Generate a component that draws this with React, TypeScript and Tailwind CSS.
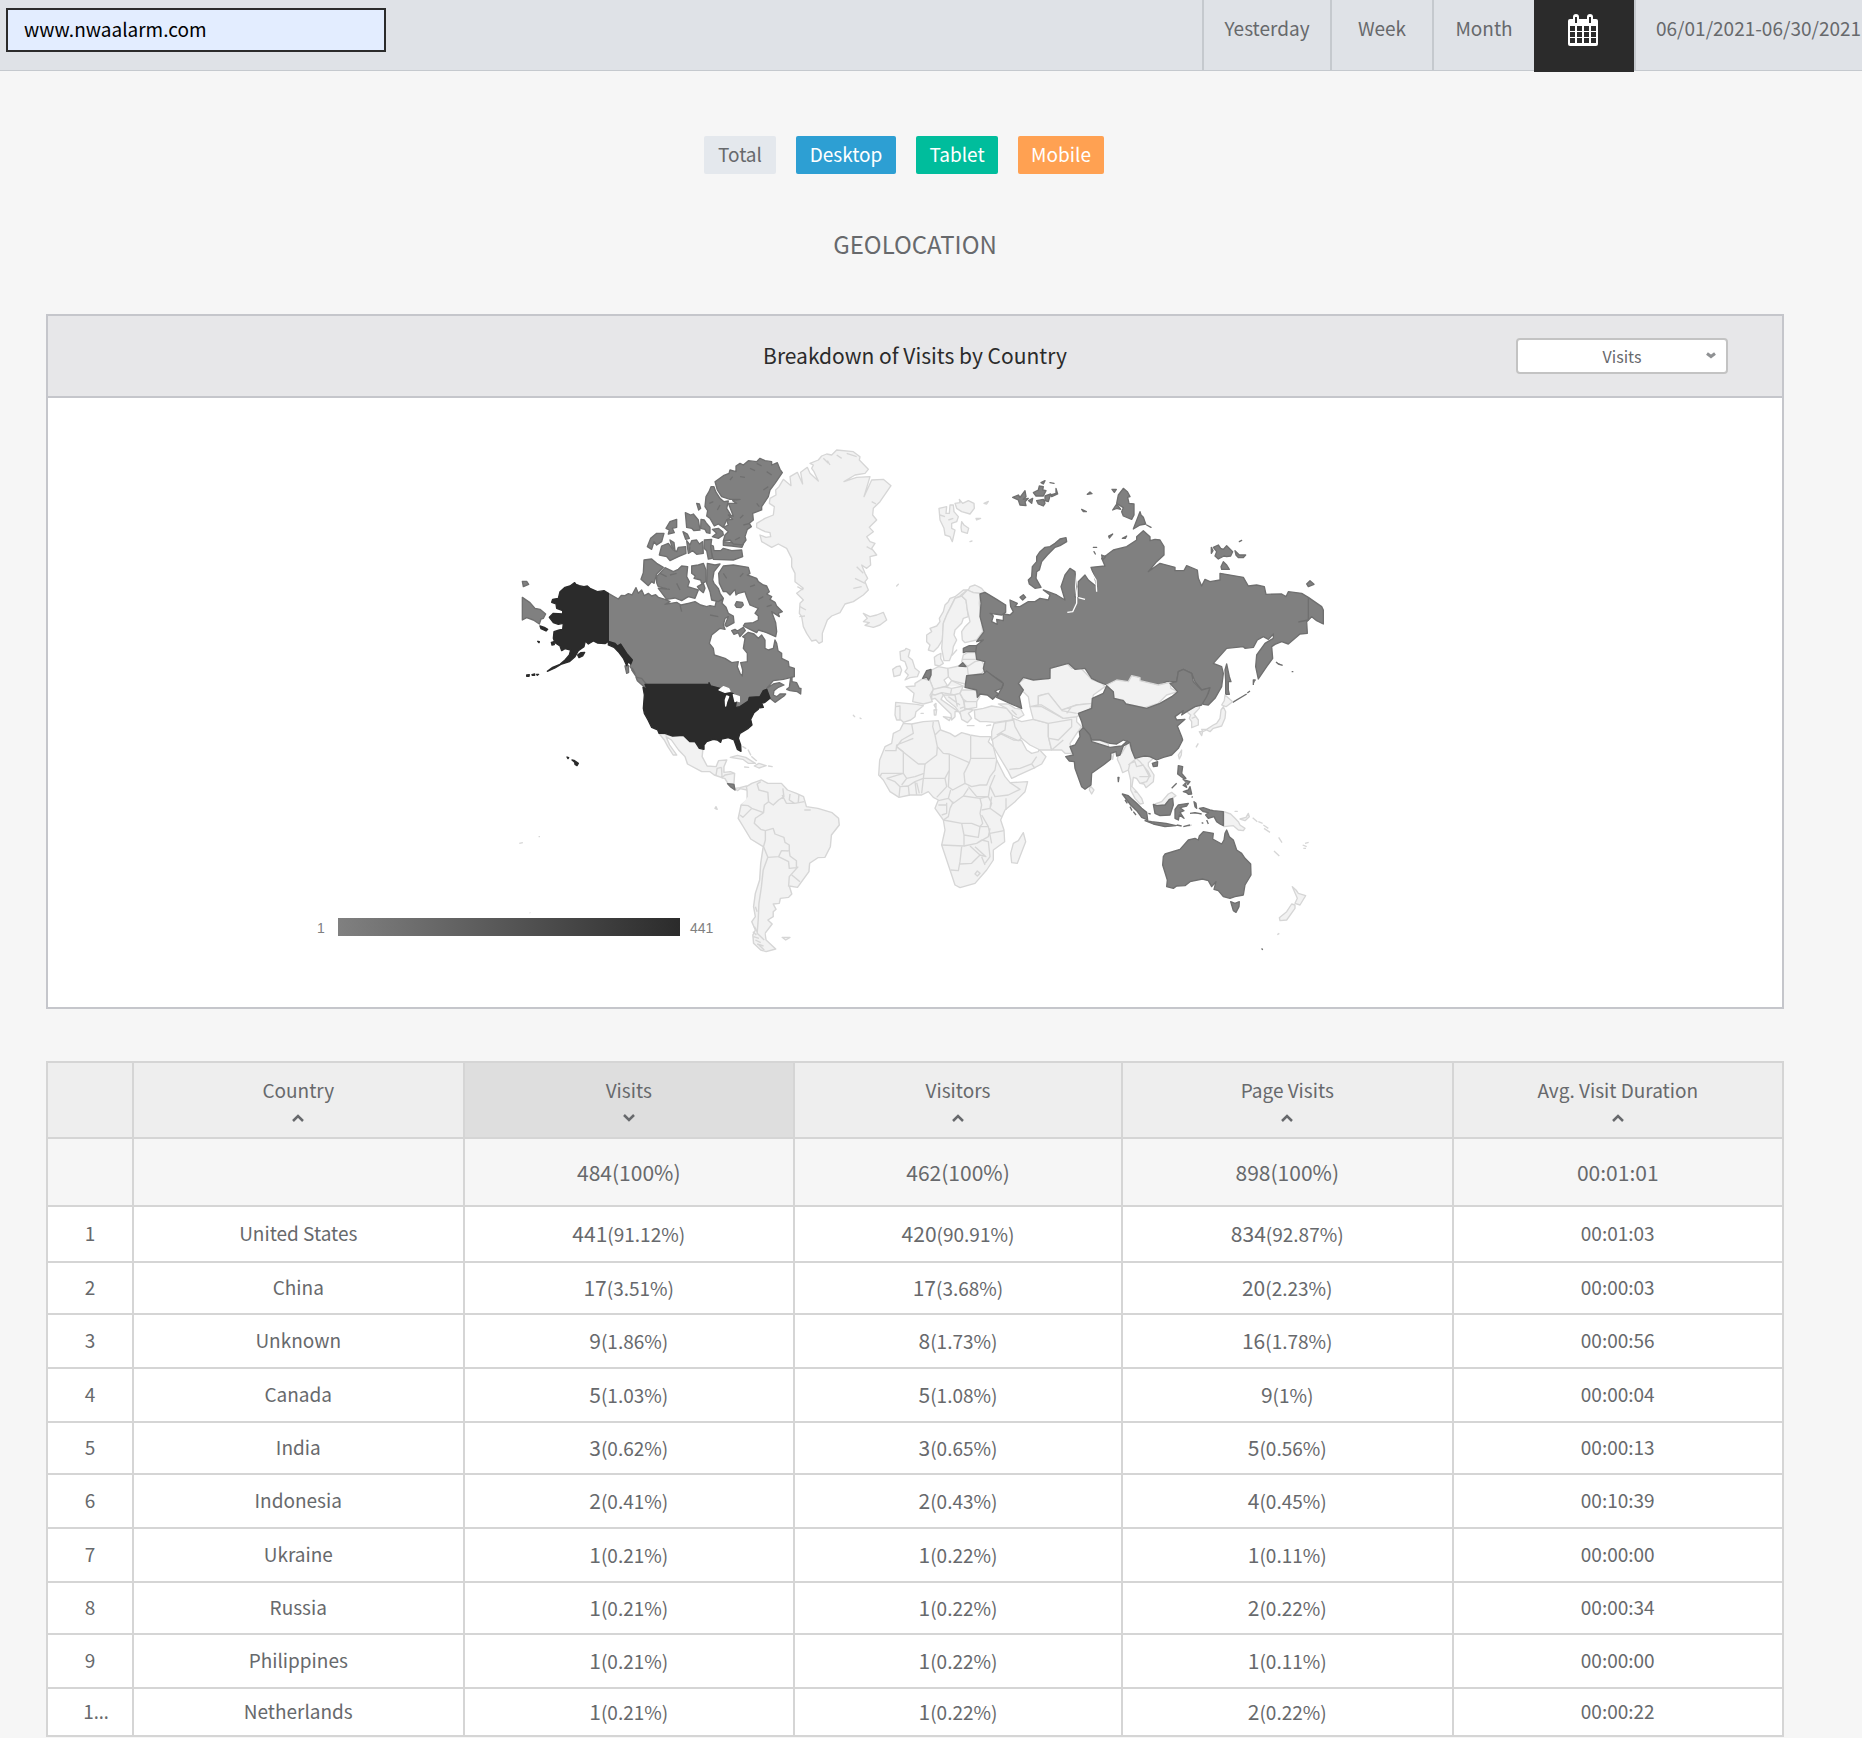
import React from "react";

const rows = [
  ["1", "United States", "441", "91.12%", "420", "90.91%", "834", "92.87%", "00:01:03"],
  ["2", "China", "17", "3.51%", "17", "3.68%", "20", "2.23%", "00:00:03"],
  ["3", "Unknown", "9", "1.86%", "8", "1.73%", "16", "1.78%", "00:00:56"],
  ["4", "Canada", "5", "1.03%", "5", "1.08%", "9", "1%", "00:00:04"],
  ["5", "India", "3", "0.62%", "3", "0.65%", "5", "0.56%", "00:00:13"],
  ["6", "Indonesia", "2", "0.41%", "2", "0.43%", "4", "0.45%", "00:10:39"],
  ["7", "Ukraine", "1", "0.21%", "1", "0.22%", "1", "0.11%", "00:00:00"],
  ["8", "Russia", "1", "0.21%", "1", "0.22%", "2", "0.22%", "00:00:34"],
  ["9", "Philippines", "1", "0.21%", "1", "0.22%", "1", "0.11%", "00:00:00"],
  ["1…", "Netherlands", "1", "0.21%", "1", "0.22%", "2", "0.22%", "00:00:22"],
];

const columns = ["Country", "Visits", "Visitors", "Page Visits", "Avg. Visit Duration"];

// Map shapes, grouped by the sheet they are drawn on
const alaskaAndUsa = [
  "M194,428 198,433 208,437 222,440 232,438 240,445 262,455 282,452 295,460 295,604 285,611 262,609 250,603 235,612 226,603 222,620 205,632 195,650 178,665 155,672 135,684 112,694 128,682 150,673 165,660 178,645 182,630 165,626 155,632 150,618 135,608 130,595 132,575 148,570 158,568 160,550 145,553 130,548 118,532 130,520 158,522 158,512 140,505 138,492 125,487 128,478 145,475 150,455 165,442 180,438Z",
  "M295,604 315,610 322,618 332,612 350,640 367,660 362,672 355,665 350,677 340,655 325,635 312,622 295,615Z",
  "M90,558 103,562 113,568 108,573 93,566Z",
  "M203,645 212,638 224,637 218,648 207,653Z",
  "M124,607 132,605 133,614 126,615Z",
  "M50,705 58,704 57,709 50,709Z M66,704 74,702 74,706 67,706Z M80,703 86,703 82,706Z M83,604 88,605 87,608Z",
  "M171,951 176,953 174,956Z M186,960 192,961 205,970 201,977 195,973 194,967Z",
  "M405,733 597,733 597,728 602,738 630,745 650,757 668,760 680,775 676,803 690,800 715,783 718,772 750,770 760,752 770,748 780,775 765,787 755,790 760,802 745,804 745,808 732,818 722,838 726,855 715,865 690,880 685,895 692,915 693,934 682,928 672,900 655,893 635,897 632,907 622,900 610,898 590,905 582,915 582,928 568,925 555,905 540,905 520,886 488,888 465,880 447,880 443,870 425,862 414,840 403,820 400,805 403,765 399,742 410,745Z",
];

const canada = [
  "M295,460 325,477 334,466 345,467 355,461 366,465 378,443 385,460 395,450 403,467 415,460 425,468 437,464 445,472 465,478 480,485 465,493 500,487 513,495 535,490 555,485 572,495 590,500 600,497 615,500 620,478 636,482 640,475 636,490 648,502 655,520 670,528 672,548 650,560 645,555 655,530 645,535 640,555 645,568 630,565 605,585 598,610 610,625 613,645 645,655 665,668 685,665 682,680 690,700 697,708 698,690 692,668 712,665 712,640 700,625 705,595 698,590 715,577 732,582 745,595 755,585 765,600 765,625 775,630 790,625 795,600 800,610 804,632 815,640 815,655 835,665 837,680 853,685 853,710 820,718 790,722 770,745 790,732 808,728 822,735 805,742 792,752 790,765 800,770 810,762 827,762 822,768 795,787 780,775 770,748 760,752 750,770 718,772 715,783 690,800 676,803 680,775 668,760 650,757 630,745 602,738 597,733 412,733 380,712 365,690 367,685 375,700 360,680 367,660 350,640 332,614 322,618 315,610 295,604Z",
  "M345,678 355,676 356,697 350,700Z M378,712 395,715 413,738 402,740 382,722Z",
  "M842,712 846,712 846,725 860,728 868,745 873,745 872,762 862,755 840,752 830,748 838,742Z",
  "M640,378 670,375 715,382 720,400 712,405 740,415 745,425 760,435 770,438 778,455 770,462 785,470 780,478 795,487 800,498 817,515 805,520 808,530 785,515 797,548 800,575 797,590 770,578 745,570 740,578 720,568 700,558 705,550 730,548 745,540 745,528 735,520 745,505 720,495 710,470 705,455 685,460 678,465 675,448 660,465 650,455 640,455 628,430 626,400Z",
  "M665,572 675,568 682,573 700,562 706,572 690,590 685,578 672,583Z",
  "M675,495 680,485 697,487 700,495 692,503 680,502Z",
  "M440,410 465,383 490,395 505,388 515,378 533,380 530,410 538,425 533,440 550,445 565,450 555,475 535,470 515,482 495,474 470,478 445,445 478,448 445,440 440,428Z",
  "M402,360 425,357 440,370 460,382 440,402 432,430 425,425 415,437 393,418 400,398Z",
  "M545,378 565,375 580,370 588,390 588,425 575,430 572,420 552,415 556,408 545,400Z",
  "M592,370 615,375 630,372 612,395 608,420 612,430 625,445 630,460 640,475 625,485 605,480 600,455 590,430Z",
  "M562,440 580,430 585,445 580,458 570,450Z",
  "M597,312 610,318 612,332 632,332 640,325 665,332 695,330 698,350 670,360 610,358 605,340Z",
  "M640,305 665,308 700,312 696,322 665,318 640,316Z",
  "M448,345 455,318 475,310 490,330 500,335 505,322 527,320 528,340 505,350 480,362 470,350Z",
  "M412,320 422,295 440,280 462,280 455,305 440,315 432,305 425,328Z",
  "M468,265 480,245 500,238 500,262 487,265 493,278 475,282 478,270Z",
  "M526,218 542,225 550,222 565,240 570,270 552,272 545,265 530,262Z",
  "M573,238 583,240 588,248 600,262 600,280 590,278 585,268 572,265Z",
  "M530,302 540,315 545,302 560,300 568,312 578,305 580,340 560,343 548,332 535,340Z",
  "M583,300 605,298 602,320 607,355 595,357 590,332 582,325Z",
  "M607,268 625,265 638,275 640,285 625,295 607,290 620,280Z",
  "M480,300 492,308 495,332 485,318Z M519,275 532,282 538,295 527,298Z M560,190 568,192 572,205 566,210Z",
  "M603,140 612,140 617,155 630,175 642,185 655,183 650,205 665,230 650,240 640,262 625,252 613,258 600,235 590,228 593,212 585,200 588,170 597,155Z",
  "M615,125 640,107 657,100 660,90 678,95 678,78 690,70 700,75 715,62 740,65 750,55 765,62 785,65 785,75 802,68 810,88 817,98 795,130 780,150 775,170 755,200 755,210 728,220 730,240 718,250 724,260 712,268 705,290 708,300 697,315 670,312 660,300 640,303 645,285 655,275 640,262 655,255 650,240 668,238 655,225 670,228 655,190 680,190 668,182 690,178 660,178 635,170 622,150Z",
];

const darkFjords = [
  "M720,85 735,92 M770,95 785,105 M690,110 705,112 M660,120 668,110 M740,70 755,78 M775,140 760,150 M740,190 748,200 M700,225 690,235 M720,250 700,255 M630,195 622,210 M610,185 598,190 M700,400 690,410 M735,435 720,440 M760,470 745,478 M785,495 770,500 M640,400 650,415 M675,300 690,292 M510,495 515,515 M600,525 625,530 M540,320 538,335 M450,400 470,410 M480,405 500,400 M500,430 510,450",
];

const leftRussia = [
  "M37,472 60,488 75,505 90,508 107,522 100,535 93,537 88,552 70,540 50,533 37,540Z",
  "M37,424 50,424 56,433 40,440Z",
];

const northAtlantic = [
  "M50,250 75,235 100,225 103,200 88,190 90,175 108,165 107,150 117,140 130,118 153,137 150,110 172,97 188,132 182,97 202,82 210,100 235,123 222,95 215,85 220,75 210,70 235,60 245,48 260,42 275,45 290,30 340,35 360,50 358,60 385,88 375,100 345,105 312,125 350,112 390,110 372,170 395,120 430,118 453,137 420,185 400,205 398,225 410,240 388,262 400,275 380,290 390,305 405,310 395,325 410,345 390,350 392,375 380,385 365,375 375,400 383,415 375,425 385,450 370,465 340,485 315,492 300,518 275,528 262,540 247,580 247,605 237,610 228,600 215,603 200,580 190,560 185,530 178,520 180,490 190,480 170,460 190,445 165,425 165,400 155,380 155,355 140,325 115,312 95,322 65,305 60,285 78,292 92,290 90,278 75,275 50,262Z",
  "M370,520 390,530 410,525 430,517 440,540 420,555 400,562 375,556 388,548 370,545 382,535Z",
  "M597,205 620,200 618,220 628,220 630,195 640,195 642,215 655,230 650,245 635,250 635,265 645,270 637,305 630,290 615,285 612,265 600,240Z",
  "M645,190 660,188 658,178 668,190 685,182 702,190 703,205 690,222 665,215 650,205Z",
  "M665,245 672,255 686,265 682,280 665,275 663,262Z",
  "M732,190 745,184 740,192Z M708,235 722,235 710,240Z M690,305 696,303Z M470,438 475,433Z M340,826 344,830Z M360,834 363,836Z",
];

const fjords = [
  "M262,62 270,75 M290,45 305,55 M320,40 350,50 M250,55 265,70 M395,185 408,192 M380,320 398,330 M350,380 370,400 M345,415 375,430 M340,445 365,440 M172,440 190,450 M180,500 198,510 M178,530 195,528 M600,225 615,230 M625,240 640,235",
];

const europeAndAfrica = [
  "M140,225 155,215 150,205 170,198 180,185 178,175 190,155 195,135 205,125 210,115 225,110 240,98 250,90 265,90 270,80 285,75 295,80 305,85 315,98 300,100 280,98 262,90 240,108 225,115 210,145 200,165 190,190 187,240 175,260 160,275 145,270 150,255 140,245Z",
  "M225,115 245,108 258,120 262,150 265,170 250,175 245,190 225,210 222,225 230,240 220,260 217,280 208,302 192,302 185,265 187,240 190,190 200,165 210,145Z",
  "M262,90 280,98 300,100 298,130 302,170 308,215 290,240 255,248 247,240 245,215 255,200 270,185 262,150 258,120 245,108Z",
  "M163,292 172,285 183,280 182,295 190,310 178,318 165,315Z M217,285 230,270Z",
  "M250,285 262,278 287,277 295,300 285,320 262,318 245,305Z M248,298 292,298",
  "M262,320 285,305 305,300 317,328 305,340 262,347Z",
  "M203,325 237,318 262,320 265,347 255,372 215,362 205,350Z",
  "M155,330 175,320 203,325 205,350 192,360 203,378 160,388 150,362Z",
  "M78,380 105,378 105,370 128,356 150,362 160,388 150,405 157,425 130,432 98,425 102,400Z",
  "M47,427 110,433 130,437 108,455 105,470 92,480 70,487 63,480 50,480 45,465Z M47,440 60,438 60,480",
  "M60,275 75,270 78,265 90,270 85,290 97,300 105,325 118,335 112,350 90,353 75,360 85,345 75,335 82,325 75,305 62,300Z",
  "M38,328 50,320 60,318 65,330 60,345 42,350Z",
  "M155,405 185,398 190,405 183,418 235,455 225,455 225,470 215,480 213,462 185,435 165,415 155,418Z",
  "M162,450 170,448 168,465 163,465Z M190,470 212,473 208,482Z M123,460 130,460Z M162,435 168,430 168,445Z",
  "M160,388 203,378 215,362 250,378 240,400 225,405 185,398 165,405 155,402Z M190,380 215,385 250,378 M215,385 212,400",
  "M190,405 220,405 240,400 250,420 255,445 245,470 240,460 225,440 200,420Z M205,410 240,435 M225,405 232,440 M240,445 255,440",
  "M240,400 245,390 285,390 300,408 290,425 260,425 250,418Z",
  "M252,425 290,425 290,442 262,447 255,445Z",
  "M240,455 262,447 280,450 265,460 275,475 262,488 245,478Z M262,497 282,497Z M320,497 332,495Z",
  "M283,450 310,445 335,438 380,445 397,465 397,480 345,487 320,485 300,485 285,475Z",
  "M355,432 385,432 405,445 422,447 432,465 415,475 397,465 380,445Z M395,450 410,465",
  "M70,490 95,492 130,485 175,482 182,510 210,520 225,530 245,518 270,525 300,530 332,530 325,545 340,560 350,600 365,630 375,650 390,668 443,665 435,695 405,725 375,750 362,780 372,810 374,845 340,870 340,900 320,930 285,970 240,983 225,975 210,930 185,855 195,810 190,780 165,745 175,720 160,712 145,695 125,705 90,705 57,712 30,695 10,660 -4,645 -1,600 15,560 35,550 40,520 60,510Z",
  "M430,818 437,845 412,910 395,908 392,880 400,850 415,842Z",
  "M335,525 360,520 400,540 425,542 440,570 455,580 475,575 477,568 498,590 485,612 460,625 395,655 385,635 355,585 340,560Z",
  "M342,490 400,480 415,515 425,535 415,542 365,520 335,540 335,515Z M378,485 375,510 350,525",
  "M400,475 425,485 460,478 505,490 505,530 515,570 480,570 450,555 425,535 405,500Z",
  "M450,440 485,440 550,475 590,470 590,485 605,500 590,520 570,550 575,580 555,580 545,570 515,570 505,530 505,490 460,478 455,460Z M505,490 575,478 575,500 535,540 508,535 M515,570 550,540",
  "M418,368 440,350 505,357 512,325 560,310 575,325 600,322 635,358 665,370 675,380 640,405 637,430 590,435 545,452 505,400 475,408 475,435 450,440 445,410 430,395Z",
  "M475,408 505,400 545,450 590,435 637,430 625,455 590,470 550,475 485,435 475,435Z M545,452 590,460 M560,460 575,440",
];

const africaBorders = [
  "M95,492 100,520 65,540 50,560 M15,572 48,572 50,555 100,535",
  "M50,560 115,612 135,612 170,585 172,560 165,525 158,500 160,485 M165,525 180,510",
  "M172,560 190,580 208,582 268,608 272,595 272,528 M272,595 345,595",
  "M50,560 70,575 70,640 5,640 0,650 M135,612 132,640 105,650 80,655 70,640 20,655",
  "M132,640 130,655 160,655 195,655 208,630 208,582 M208,630 205,680 218,690 255,670 252,640 268,608",
  "M255,670 275,680 300,675 320,675 330,650 345,630 350,600 M345,645 330,680 345,710 385,705 420,688 390,668",
  "M265,680 290,710 325,710 330,680 M130,655 125,700 M195,655 200,680 170,712 M20,655 45,665 60,680 57,712",
  "M85,678 88,708 M105,665 110,705 M60,680 85,678 105,665 130,655 M110,668 118,700 M80,655 65,675",
  "M212,690 205,715 220,730 250,708 265,685 M205,715 175,722 M175,735 200,735 M200,728 200,760 185,765",
  "M190,780 205,770 210,745 220,725 M250,708 300,715 305,735 300,760 308,790 300,800 275,790 245,790 190,780",
  "M300,715 325,710 335,730 330,745 305,750 M330,745 365,770 M378,750 378,715 M335,710 330,745",
  "M245,790 252,825 252,858 185,855 M252,825 295,832 300,800 325,800 305,765",
  "M252,858 290,850 325,830 330,805 M330,820 372,812 M290,850 305,840 325,845 330,890 315,910 M325,800 335,850",
  "M245,860 240,905 235,932 212,930 M240,912 275,910 300,885 270,858 M285,860 318,890 300,885 M305,890 315,915",
  "M285,942 292,933 300,940 292,948Z M388,628 420,625 455,612 470,590 M455,612 465,625",
];

const europeVisited = [
  "M250,265 268,257 290,257 287,275 258,275 250,278Z",
  "M237,318 248,308 258,320Z",
  "M128,355 140,332 153,328 153,345 146,360 140,352Z",
  "M260,347 310,342 320,333 335,345 355,360 370,370 365,385 345,393 355,402 338,418 322,405 300,402 292,412 290,390 255,382Z",
];

const russia = [
  "M60,402 75,397 110,418 137,435 137,457 125,465 90,460 100,468 95,485 112,493 110,478 130,482 130,462 150,465 160,455 152,440 150,420 172,430 165,440 180,440 205,425 225,425 240,415 265,420 270,405 250,390 290,405 315,420 303,380 315,345 330,325 345,335 350,380 345,410 355,415 355,365 375,345 385,360 410,380 405,355 393,322 435,318 425,295 440,285 460,270 500,260 530,240 530,230 550,212 570,230 570,242 585,238 600,240 612,260 612,285 590,305 565,335 600,310 645,322 645,332 672,332 680,317 712,330 715,355 725,378 735,358 750,365 780,360 780,340 850,352 865,378 890,375 913,380 918,403 965,402 978,410 985,395 1025,400 1045,412 1085,440 1090,450 1090,492 1070,482 1055,470 1040,485 1042,520 1020,522 985,552 965,545 945,553 935,560 938,595 920,620 895,657 887,620 890,585 915,550 940,535 940,522 925,538 910,530 892,540 880,562 855,565 850,560 800,565 760,610 785,620 790,640 785,680 765,715 745,735 730,733 725,722 745,700 748,685 725,690 705,665 695,640 670,628 655,635 650,665 620,665 600,675 545,665 520,648 505,665 470,660 440,675 415,665 395,655 375,625 345,628 325,610 270,625 270,655 220,660 190,652 175,670 190,690 178,710 185,745 160,735 110,712 130,675 125,665 90,642 75,640 70,625 75,605 50,598 45,560 70,540 50,545 72,515 60,470 63,430Z",
  "M205,360 215,350 217,320 230,305 230,290 240,275 255,262 270,260 285,250 300,237 318,233 320,245 300,257 285,262 262,285 245,305 238,330 230,335 228,355 243,382 225,385 208,372Z",
  "M158,112 175,105 180,112 195,92 198,110 190,118 205,115 195,125 198,137 180,135 175,120Z",
  "M220,98 235,90 238,78 250,80 248,90 258,92 250,108 228,108Z",
  "M230,122 250,118 255,130 250,138 235,132Z M255,108 272,102 265,125 255,122Z M272,105 288,100 288,85 293,102 275,110Z M243,68 255,62 250,72Z M270,68 282,70Z M218,115 215,130 206,122Z",
  "M490,85 502,95 510,110 503,112 507,130 522,132 522,165 515,178 490,168 485,155 490,143 470,130 475,105Z",
  "M540,155 543,165 550,172 557,192 540,195 520,207Z M456,88 469,88 463,97Z M458,150 470,132 482,148 470,145Z M382,103 390,96 396,101Z M365,148 379,155 370,155Z M560,195 573,202Z",
  "M446,228 458,222 448,234Z M487,235 500,228 496,235Z M400,262 410,262Z M402,275 406,282Z M425,285 437,290 428,300Z",
  "M760,262 775,255 782,265 790,268 800,257 818,275 812,288 800,290 792,288 775,297 765,288 770,275Z",
  "M825,272 838,285 857,285 850,293 835,293 828,285Z M790,305 800,315 808,328 785,328 783,320Z M754,262 759,272 754,280Z M838,245 845,241Z",
  "M1040,372 1050,362 1062,373 1045,380Z",
  "M800,612 808,650 813,665 805,665 805,690 808,703 797,703 797,660 795,630Z",
  "M818,727 860,702 M862,699 870,693 M880,675 880,660 887,660 M948,606 955,612 968,616 M995,635 1000,635",
  "M180,412 190,404 197,412 188,420Z",
];

const asiaAndOceania = [
  "M200,135 230,120 265,125 275,107 300,113 300,122 355,135 390,127 393,145 413,155 380,165 355,190 315,203 258,192 250,180 222,175 218,155Z",
  "M152,297 165,295 205,312 205,322 180,318 155,308Z M212,340 222,338 218,358Z",
  "M150,437 162,450 155,462 148,450Z",
  "M235,345 245,340 265,305 275,330 285,352 315,345 340,355 325,368 325,378 342,405 340,425 318,443 312,432 300,430 290,415 280,412 276,440 290,455 305,475 310,490 300,492 285,475 272,450 272,420 265,390 248,398 240,375 232,358Z M265,390 270,370 285,365 290,380 310,375 328,410 320,425 300,430 M285,352 300,365 325,395 332,410 M298,410 328,410 M265,375 290,355 M283,455 292,458",
  "M345,492 365,485 385,462 395,457 408,467 390,480 375,495 350,498Z",
  "M552,515 572,522 585,535 595,545 600,555 615,565 610,572 595,570 580,557 552,560Z M600,537 618,532 625,520 628,530 615,542Z M585,514 592,514Z M638,533 652,545 M655,545 668,550 M670,555 685,565 M672,565 690,577 M716,592 726,608 M702,633 718,648 M788,615 800,620 M795,610 806,607 M790,625 798,625",
  "M415,345 425,330 424,345 418,357Z",
  "M440,215 455,205 480,192 478,205 462,222 475,240 475,255 455,263 455,245 448,235 452,225Z M455,235 468,230",
  "M485,268 500,268 520,255 530,250 540,235 543,210 550,200 557,215 555,235 545,258 520,265 510,275 500,270 488,275Z M478,275 488,275 485,287Z M555,165 578,185 558,200 545,195 553,182Z M475,310 468,322",
  "M757,740 768,750 775,760 797,767 780,795 765,790 772,775Z",
  "M755,792 765,795 765,805 740,840 720,842 718,833 740,815Z M712,884 718,880 M445,558 455,555",
];

const asiaVisited = [
  "M200,137 220,155 222,175 250,182 258,192 320,205 360,190 395,170 413,155 390,130 410,125 415,95 430,88 455,100 460,125 485,150 510,143 500,170 485,195 465,200 440,215 425,225 430,212 405,230 410,240 435,238 412,258 425,290 428,300 415,325 395,345 370,352 350,360 330,350 315,348 305,350 285,355 275,330 270,308 250,300 230,312 210,310 180,300 155,300 145,280 130,265 125,245 115,220 155,205 157,175 190,160Z",
  "M337,370 353,365 352,378 340,380Z",
  "M118,275 130,262 150,285 155,305 210,322 245,318 262,303 268,308 250,318 240,345 230,348 228,335 212,340 212,358 190,375 155,400 153,435 135,448 125,440 105,385 103,365 88,363 77,350 100,345 90,320 105,315 120,290Z M234,412 237,412 235,425Z",
  "M247,462 265,467 290,490 305,505 320,517 323,540 305,532 290,512 272,495Z M315,542 335,545 378,550 408,557 375,560 340,552Z M255,480 262,490 M270,500 276,512 M280,515 288,525 M410,555 425,558 M430,560 450,555 M325,520 332,522",
  "M340,493 350,497 375,495 388,478 398,475 400,495 390,525 360,527 345,520Z",
  "M405,508 415,495 445,490 440,498 420,503 432,512 420,517 432,535 418,525 415,540 405,535Z M462,485 468,490 470,505 465,500Z M450,520 465,518 485,522 M485,548 490,550 M500,540 505,552",
  "M478,505 490,503 510,510 520,512 550,515 550,557 540,552 530,545 522,530 505,535 497,525 505,518 490,515Z",
  "M415,377 428,380 425,400 438,415 430,415 413,402Z M428,418 450,425 442,435 M435,428 440,442 428,435 M430,455 445,450 450,440 455,462 445,463 440,458Z M395,445 410,430 M455,470 458,472",
  "M380,740 382,720 368,675 370,650 375,642 420,628 445,600 465,595 475,600 478,588 490,575 520,580 518,597 545,612 552,600 555,580 560,570 568,590 580,600 590,630 605,640 615,655 632,672 633,705 615,735 610,765 585,770 570,775 550,770 535,752 522,748 528,725 515,740 505,722 487,717 450,725 435,737 410,738 400,745Z",
  "M572,785 585,790 598,785 597,800 588,817 580,812Z M665,925 668,930",
];

const latinAmerica = [
  "M1005,-20 1043,-12 1073,-14 1092,5 1110,8 1128,28 1126,50 1140,78 1165,80 1172,62 1195,60 1187,80 1187,97 1205,95 1217,100 1215,132 1198,130 1190,116 1160,105 1148,95 1125,95 1085,72 1078,50 1060,30 1040,0 1025,-10 1035,15 1055,45 1045,45 1030,20 1020,0Z M1165,105 1168,85 1180,82 M1180,115 1190,105 1215,100 M1180,82 1182,115",
  "M1218,145 1232,143 1250,138 1252,150 1232,146 1225,152Z",
  "M1205,52 1225,46 1248,52 1275,70 1255,70 1240,58Z M1272,78 1285,70 1305,77 1285,84Z M1245,81 1256,82Z M1312,78 1322,80Z M1240,20 1248,25Z M1255,30 1262,45Z M1265,50 1278,62Z",
  "M1250,140 1265,130 1292,120 1310,130 1348,130 1365,150 1390,160 1410,170 1418,200 1450,205 1490,218 1508,235 1510,255 1488,285 1485,320 1470,352 1450,353 1427,370 1425,395 1393,442 1370,438 1377,462 1368,472 1345,475 1342,490 1325,492 1333,508 1325,515 1325,530 1310,540 1322,552 1302,580 1305,600 1332,627 1305,635 1290,630 1270,610 1268,585 1275,570 1265,545 1275,530 1270,500 1275,460 1287,420 1290,370 1297,320 1262,297 1240,258 1227,235 1235,195 1252,180 1252,155Z",
  "M1350,592 1372,592 1360,600Z M1162,205 1168,208 1165,200Z M614,310 624,308 M668,290 672,290 M643,518 645,519",
  "M1235,195 1255,197 1265,205 1298,218 1300,195 1312,185 1310,157 1285,150 1280,132 1290,125 M1312,185 1325,195 1340,180 1355,170 1352,145 M1350,165 1362,190 1385,190 1412,185 M1372,162 1370,180 1385,190 M1397,165 1395,188",
  "M1232,225 1240,232 1265,205 M1298,218 1275,235 1272,250 1290,268 1303,272 1303,300 1298,320 1310,352 M1303,272 1325,265 1330,282 1355,292 1358,307 1370,315 1370,333 1348,332 1340,350 1310,352",
  "M1340,350 1368,365 1370,385 1390,383 1390,362 1372,348 1370,333 M1395,380 1370,410 1368,440 M1377,405 1400,425 M1310,352 1297,390 1292,440 1285,490 1283,540 1280,580 1300,600 M1285,615 1300,630 M1412,210 1430,210",
  "M1272,560 1280,575 M1270,590 1285,595 M1275,600 1290,608 M1280,612 1298,618 M1275,500 1280,515 M1268,575 1278,585",
];

const light = "fill-[#f2f2f2] stroke-[#d6d6d6]";
const visited = "fill-[#808080] stroke-[#6f6f6f]";
const dark = "fill-[#2b2b2b] stroke-[#2b2b2b]";
const water = "fill-white stroke-white";
const lines = "fill-none stroke-[#d6d6d6]";

type ShapesProps = { paths: string[]; tone: string; transform: string };

const Shapes = ({ paths, tone, transform }: ShapesProps) => (
  <g transform={transform} className={tone} strokeWidth={4} strokeLinejoin="round">
    {paths.map((d) => (
      <path key={d} d={d} />
    ))}
  </g>
);

const west = "translate(510 440) scale(0.33333)";
const atlantic = "translate(740 440) scale(0.33333)";
const middle = "translate(880 560) scale(0.33333)";
const north = "translate(960 460) scale(0.33333)";
const east = "translate(1040 640) scale(0.33333)";
const south = "translate(300 740) scale(0.35714 0.33333)";

const WorldMap = () => (
  <svg viewBox="48 398 1734 609" className="block w-full h-auto" role="img" aria-label="Visits by country">
    <defs>
      <linearGradient id="scale">
        <stop offset="0" stopColor="#808080" />
        <stop offset="1" stopColor="#2b2b2b" />
      </linearGradient>
    </defs>
    <Shapes paths={latinAmerica} tone={light} transform={south} />
    <Shapes paths={["M1197,131 1215,133 1218,150 1205,140Z"]} tone={visited} transform={south} />
    <Shapes paths={northAtlantic} tone={light} transform={atlantic} />
    <Shapes paths={fjords} tone={lines} transform={atlantic} />
    <Shapes paths={canada} tone={visited} transform={west} />
    <Shapes paths={darkFjords} tone="fill-none stroke-[#6f6f6f]" transform={west} />
    <Shapes paths={leftRussia} tone={visited} transform={west} />
    <Shapes paths={alaskaAndUsa} tone={dark} transform={west} />
    {/* Great Lakes */}
    <Shapes
      paths={["M627,750 640,740 656,746 660,754 645,757Z", "M650,768 646,780 647,798 650,785 656,770Z", "M670,764 688,770 688,785 680,782 675,785Z"]}
      tone={water}
      transform={west}
    />
    <Shapes paths={europeAndAfrica} tone={light} transform={middle} />
    <Shapes paths={africaBorders} tone={lines} transform={middle} />
    <Shapes paths={russia} tone={visited} transform={north} />
    <Shapes paths={["M1045,415 1045,480 1015,486"]} tone="fill-none stroke-[#6f6f6f]" transform={north} />
    {/* Gulf of Ob */}
    <Shapes paths={["M350,340 347,380 350,410 350,430 338,455 322,457", "M393,335 408,360 410,395", "M355,413 375,418"]} tone="fill-none stroke-white" transform={north} />
    <Shapes paths={europeVisited} tone={visited} transform={middle} />
    <Shapes paths={asiaAndOceania} tone={light} transform={east} />
    <Shapes paths={asiaVisited} tone={visited} transform={east} />
    {/* Legend */}
    <rect x="338" y="918" width="342" height="18" fill="url(#scale)" />
    <text x="317" y="933" className="fill-[#808080] text-[14px] font-['Liberation_Sans',sans-serif]">1</text>
    <text x="690" y="933" className="fill-[#808080] text-[14px] font-['Liberation_Sans',sans-serif]">441</text>
  </svg>
);

const CalendarIcon = () => (
  <svg viewBox="0 0 30 32" className="w-[30px] h-8" fill="none">
    <path d="M2 5h26a2 2 0 0 1 2 2v23a2 2 0 0 1-2 2H2a2 2 0 0 1-2-2V7a2 2 0 0 1 2-2z" fill="#fff" />
    <path d="M8 3v5M22 3v5" stroke="#fff" strokeWidth="6" strokeLinecap="round" />
    <path d="M8 3v6M22 3v6" stroke="#2b2b2b" strokeWidth="2" />
    {[12, 18, 24].map((y) => (
      <path key={y} d={`M2 ${y}h5v5h-5zM9 ${y}h5v5h-5zM16 ${y}h5v5h-5zM23 ${y}h5v5h-5z`} fill="#2b2b2b" />
    ))}
  </svg>
);

const SortIcon = ({ down = false }: { down?: boolean }) => (
  <svg viewBox="0 0 12 8" className="mx-auto mt-3 w-3 h-2" fill="none">
    <path d={down ? "M1 1l5 5 5-5" : "M1 7l5-5 5 5"} stroke="#67696c" strokeWidth="2.5" />
  </svg>
);

const Rank = ({ rank }: { rank: string }) => {
  if (!rank.endsWith("…")) return <td>{rank}</td>;
  return (
    <td className="pl-3!">
      {rank.slice(0, -1)}
      <span className="font-['Noto_Sans',sans-serif]">…</span>
    </td>
  );
};

const Count = ({ value, share }: { value: string; share: string }) => (
  <td>
    <span className="text-[21px]">{value}</span>({share})
  </td>
);

const App = () => {
  return (
    <div className="min-h-screen overflow-hidden bg-[#f6f6f6] font-['Noto_Sans_CJK_SC',sans-serif] text-[19px] leading-6 text-[#67696c]">
      {/* Top bar */}
      <header className="flex h-[71px] items-start justify-between border-b border-[#c5c9ce] bg-[#dfe2e7]">
        <input
          aria-label="Website"
          defaultValue="www.nwaalarm.com"
          className="mt-2 ml-1.5 h-11 w-[380px] border-2 border-[#2b2b2b] bg-[#e3edff] px-4 pb-1 text-black"
        />
        <nav className="flex h-[70px]">
          <button className="w-32 border-l-2 border-[#c5c9ce] pb-3.5">Yesterday</button>
          <button className="w-[102px] border-l-2 border-[#c5c9ce] pb-3.5">Week</button>
          <button className="w-[102px] border-l-2 border-[#c5c9ce] pb-3.5">Month</button>
          <button aria-label="Pick dates" className="flex h-[72px] w-[100px] items-center justify-center bg-[#2b2b2b] pr-0.5 pb-3">
            <CalendarIcon />
          </button>
          <button className="w-[228px] border-l-2 border-[#c5c9ce] pb-3.5 pl-5 text-left whitespace-nowrap">06/01/2021-06/30/2021</button>
        </nav>
      </header>

      <main className="mr-[78px] ml-[46px]">
        {/* Device filter */}
        <div className="mt-[65px] flex justify-center pr-0.5 text-white">
          <button className="mr-5 h-[38px] w-[72px] rounded-xs bg-[#e4e8ed] pb-0.5 text-[#67696c]">Total</button>
          <button className="mr-5 h-[38px] w-[100px] rounded-xs bg-[#2d9fd3] pb-0.5">Desktop</button>
          <button className="mr-5 h-[38px] w-[82px] rounded-xs bg-[#00bd9c] pb-0.5">Tablet</button>
          <button className="mr-5 h-[38px] w-[86px] rounded-xs bg-[#ffa152] pb-0.5">Mobile</button>
        </div>

        <h1 className="mt-[52px] text-center text-[24px] leading-9">GEOLOCATION</h1>

        {/* Map */}
        <section className="mt-[52px] border-2 border-[#c5c6cb] bg-white">
          <div className="relative flex h-[82px] items-center justify-center border-b-2 border-[#c5c6cb] bg-[#e7e7e9]">
            <h2 className="pb-0.5 text-[21px] text-[#2b2b2b]">Breakdown of Visits by Country</h2>
            <div className="absolute right-[54px]">
              <select
                aria-label="Metric"
                className="block h-9 w-[212px] appearance-none rounded border-2 border-[#c3c3c3] bg-white text-center text-[16px]"
              >
                <option>Visits</option>
              </select>
              <svg viewBox="0 0 10 7" className="pointer-events-none absolute top-3.5 right-3 h-[7px] w-2.5" fill="none">
                <path d="M1 1.500l4 3 4-3" stroke="#8f9193" strokeWidth="3" />
              </svg>
            </div>
          </div>
          <WorldMap />
        </section>

        {/* Countries */}
        <table className="mt-[52px] w-full table-fixed border-collapse text-center [&_td]:border-2 [&_td]:border-[#d5d5d5] [&_td]:p-0 [&_th]:border-2 [&_th]:border-[#d5d5d5] [&_th]:p-0">
          <thead>
            <tr className="h-[76px] bg-[#eee]">
              <th className="w-[86px]" />
              {columns.map((name) => (
                <th
                  key={name}
                  className={`font-normal ${name === "Visits" ? "bg-[#dedede]" : ""} ${name === "Visitors" ? "w-[328px]" : ""}`}
                >
                  {name}
                  <SortIcon down={name === "Visits"} />
                </th>
              ))}
            </tr>
            <tr className="h-[68px] text-[21px]">
              <td />
              <td />
              <td>484(100%)</td>
              <td>462(100%)</td>
              <td>898(100%)</td>
              <td>00:01:01</td>
            </tr>
          </thead>
          <tbody className="[&_td]:pb-0.5 [&>tr:nth-child(3n+2)]:h-[52px]">
            {rows.map(([rank, country, visits, visitsPct, visitors, visitorsPct, pages, pagesPct, time]) => (
              <tr key={country} className="h-[54px] bg-white first:h-14 last:h-12">
                <Rank rank={rank} />
                <td>{country}</td>
                <Count value={visits} share={visitsPct} />
                <Count value={visitors} share={visitorsPct} />
                <Count value={pages} share={pagesPct} />
                <td>{time}</td>
              </tr>
            ))}
          </tbody>
        </table>
      </main>
    </div>
  );
};

export default App;
